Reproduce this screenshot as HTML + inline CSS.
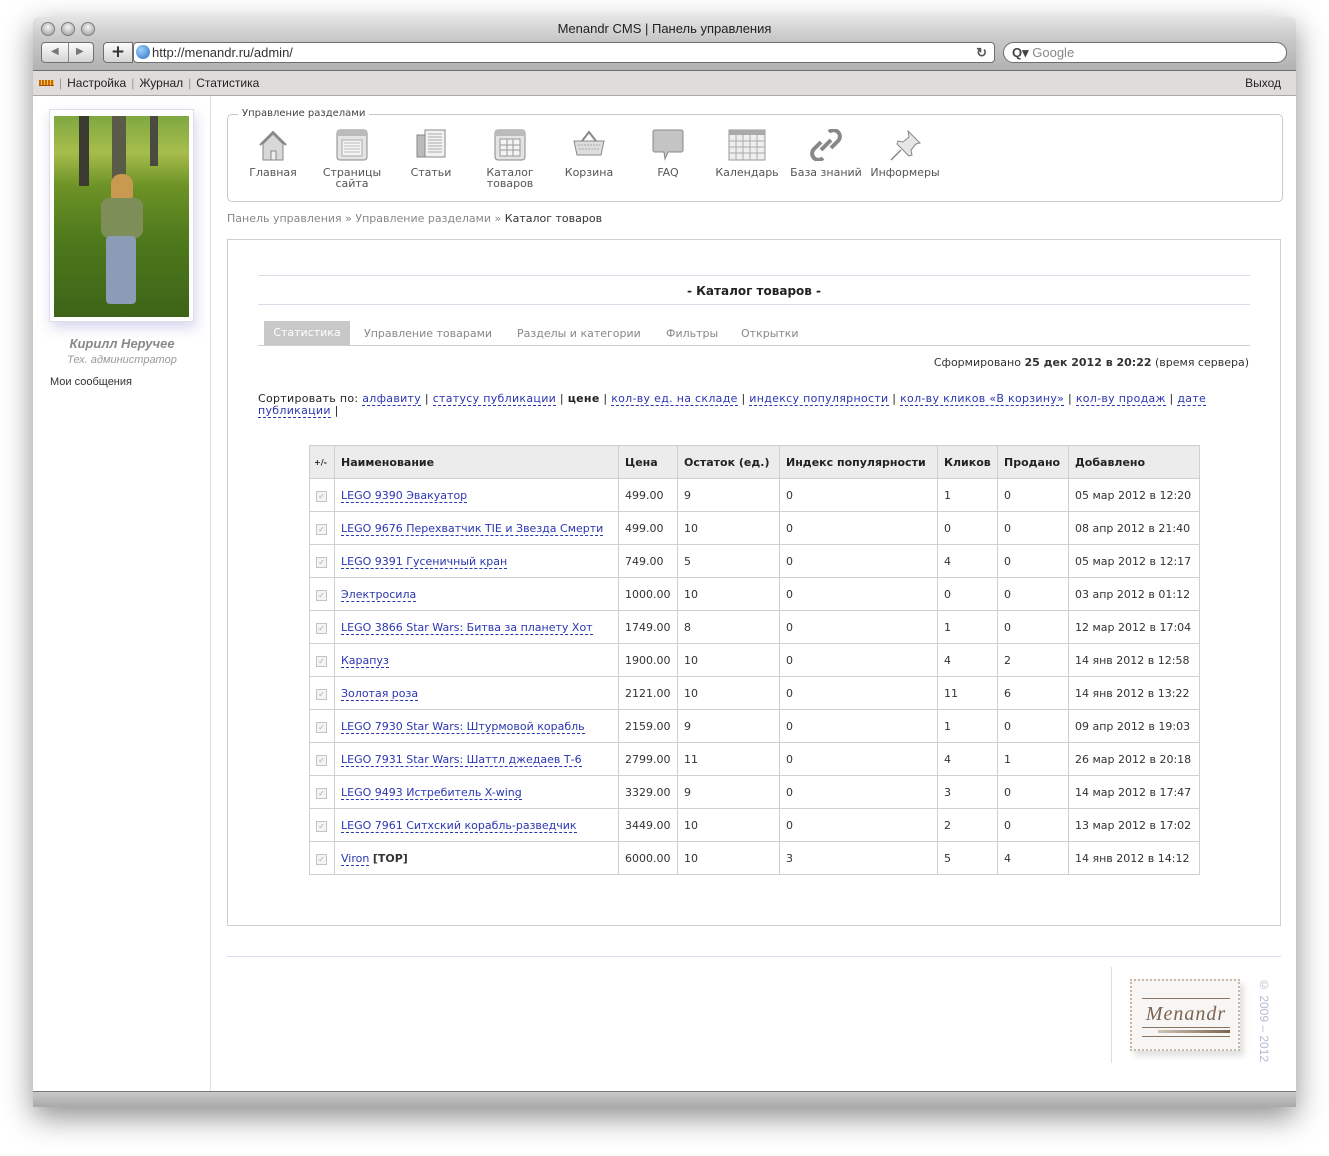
<!DOCTYPE html>
<html><head><meta charset="utf-8">
<style>
*{margin:0;padding:0;box-sizing:border-box}
body{width:1329px;height:1156px;background:#fff;position:relative;overflow:hidden;font-family:"DejaVu Sans","Liberation Sans",sans-serif;font-size:11px;color:#333}
.abs{position:absolute}
.win{left:33px;top:17px;width:1263px;height:1090px;box-shadow:0 10px 30px rgba(0,0,0,.45);border-radius:5px 5px 0 0;background:#fff;overflow:hidden}
.tb{left:0;top:0;width:1263px;height:54px;background:linear-gradient(#e4e4e4,#c9c9c9 40%,#b2b2b2);border-bottom:1px solid #6f6f6f}
.title{left:0;top:4px;width:1263px;text-align:center;font-family:"Liberation Sans",sans-serif;font-size:13px;color:#222}
.light{top:5px;width:14px;height:14px;border-radius:50%;background:radial-gradient(circle at 50% 35%,#f4f4f4,#b5b5b5 70%,#8a8a8a);border:1px solid #7d7d7d}
.btn{border:1px solid #707070;border-radius:4px;background:linear-gradient(#fbfbfb,#d4d4d4);height:21px}
.url{left:100px;top:25px;width:862px;height:21px;background:#fff;border:1px solid #6d6d6d;border-radius:4px;font-family:"Liberation Sans",sans-serif;font-size:13px;line-height:19px}
.search{left:970px;top:25px;width:284px;height:21px;background:#fff;border:1px solid #6d6d6d;border-radius:11px;font-family:"Liberation Sans",sans-serif;font-size:13px;color:#888;line-height:19px}
.nav{left:0;top:54px;width:1263px;height:25px;background:#e1dcdc;border-bottom:1px solid #a9a9a9;font-family:"Liberation Sans",sans-serif;font-size:12px;line-height:24px;color:#222}
.nav .sep{color:#999;margin:0 5px}
.side{left:0;top:79px;width:178px;height:995px;border-right:1px solid #dcdcee}
.bottom{left:0;top:1074px;width:1263px;height:16px;background:linear-gradient(#c9c9c9,#a9a9a9);border-top:1px solid #777}
a{color:#2a36b0;text-decoration:none;border-bottom:1px dashed #2a36b0}
.fs{left:194px;top:97px;width:1056px;height:88px;border:1px solid #c8c8c8;border-radius:5px}
.fs .lg{position:absolute;left:10px;top:-7px;background:#fff;padding:0 4px;font-size:10px;color:#444}
.ic{position:absolute;top:14px;width:78px;text-align:center;font-size:11px;color:#555;line-height:11px}
.ic svg{display:block;margin:0 auto 6px}
.crumb{left:194px;top:195px;font-size:11px;color:#888}
.panel{left:194px;top:222px;width:1054px;height:687px;border:1px solid #cfcfcf}
.hl{position:absolute;left:30px;width:992px;height:1px;background:#dcdce8}
table{position:absolute;left:81px;top:205px;border-collapse:collapse;font-size:11px}
td,th{border:1px solid #cfcfcf;height:33px;padding:0 6px;text-align:left;white-space:nowrap;color:#333}
th{background:#ececec;font-weight:bold;color:#222}
.cb{width:11px;height:11px;border:1px solid #c4c4c4;background:#f4f4f4;display:inline-block;font-size:8px;color:#aaa;line-height:9px;text-align:center}
</style></head><body>
<div class="abs win">
 <div class="abs tb">
  <div class="abs title">Menandr CMS | Панель управления</div>
  <div class="abs light" style="left:8px"></div>
  <div class="abs light" style="left:28px"></div>
  <div class="abs light" style="left:48px"></div>
  <div class="abs btn" style="left:8px;top:25px;width:53px"><span style="position:absolute;left:9px;top:3px;color:#777;font-size:10px">◀</span><span style="position:absolute;left:26px;top:0;width:1px;height:19px;background:#888"></span><span style="position:absolute;left:34px;top:3px;color:#777;font-size:10px">▶</span></div>
  <div class="abs btn" style="left:70px;top:25px;width:30px;border-radius:4px 0 0 4px;font-size:17px;font-weight:bold;text-align:center;line-height:19px;color:#333">+</div>
  <div class="abs url"><span style="display:inline-block;width:14px;height:14px;border-radius:50%;background:radial-gradient(circle at 35% 35%,#9fd0ff,#2b6fc2);vertical-align:-2px;margin:0 2px 0 2px"></span>http://menandr.ru/admin/<span style="position:absolute;right:7px;top:0;font-weight:bold;color:#555">↻</span></div>
  <div class="abs search"><span style="margin-left:8px;color:#444;font-weight:bold">Q▾</span> Google</div>
 </div>
 <div class="abs nav"><span style="display:inline-block;width:15px;height:6px;margin-left:6px;background:repeating-linear-gradient(90deg,#c46a00 0 2px,#f3c060 2px 3px);border-bottom:1px solid #a05000;vertical-align:1px"></span><span class="sep">|</span>Настройка<span class="sep">|</span>Журнал<span class="sep">|</span>Статистика<span style="position:absolute;right:15px">Выход</span></div>
 <div class="abs side">
  <div class="abs" style="left:16px;top:13px;width:145px;height:213px;background:#fff;border:1px solid #dedee8;box-shadow:2px 6px 12px rgba(140,140,210,.35)"></div>
  <div class="abs" style="left:21px;top:20px;width:135px;height:201px;background:linear-gradient(180deg,#7ea840 0%,#a7bd4c 18%,#6d9226 35%,#4f7a1c 60%,#3d6418 100%)">
   <div class="abs" style="left:25px;top:0;width:10px;height:70px;background:#3a3a30"></div>
   <div class="abs" style="left:58px;top:0;width:14px;height:75px;background:#5a5a48"></div>
   <div class="abs" style="left:96px;top:0;width:8px;height:50px;background:#4a4a40"></div>
   <div class="abs" style="left:57px;top:58px;width:22px;height:26px;border-radius:10px 10px 4px 4px;background:#c89a50"></div>
   <div class="abs" style="left:47px;top:82px;width:42px;height:40px;border-radius:8px;background:#7d8e58"></div>
   <div class="abs" style="left:52px;top:120px;width:30px;height:68px;background:#8c9cb6;border-radius:4px"></div>
  </div>
  <div class="abs" style="left:0;top:240px;width:178px;text-align:center;font-family:'Liberation Sans',sans-serif;font-weight:bold;font-style:italic;font-size:13px;color:#888">Кирилл Неручее</div>
  <div class="abs" style="left:0;top:258px;width:178px;text-align:center;font-family:'Liberation Sans',sans-serif;font-style:italic;font-size:11px;color:#999">Тех. администратор</div>
  <div class="abs" style="left:17px;top:280px;font-family:'Liberation Sans',sans-serif;font-size:11px;color:#333">Мои сообщения</div>
 </div>
 <div class="abs fs"><span class="lg">Управление разделами</span>
  <div class="ic" style="left:6px"><svg width="34" height="32" viewBox="0 0 34 32"><path d="M4 16 L17 3 L30 16" fill="none" stroke="#888" stroke-width="2"/><path d="M7 15 V31 H27 V15 L17 5Z" fill="#d8d8d8" stroke="#888"/><rect x="15" y="22" width="5" height="9" fill="#eee" stroke="#888"/></svg>Главная</div>
  <div class="ic" style="left:85px"><svg width="32" height="32"><rect x="1" y="1" width="30" height="30" rx="3" fill="#e4e4e4" stroke="#888"/><rect x="1" y="1" width="30" height="6" fill="#bbb"/><rect x="6" y="11" width="20" height="16" fill="#f4f4f4" stroke="#aaa"/><path d="M8 14h16M8 17h16M8 20h16M8 23h16" stroke="#bbb"/></svg>Страницы<br>сайта</div>
  <div class="ic" style="left:164px"><svg width="32" height="32"><rect x="2" y="6" width="14" height="22" fill="#bbb" stroke="#888"/><rect x="10" y="1" width="20" height="27" fill="#f2f2f2" stroke="#888"/><path d="M13 5h14M13 8h14M13 11h14M13 14h14M13 17h14M13 20h14M13 23h14" stroke="#aaa"/></svg>Статьи</div>
  <div class="ic" style="left:243px"><svg width="32" height="32"><rect x="1" y="1" width="30" height="30" rx="3" fill="#e4e4e4" stroke="#888"/><rect x="1" y="1" width="30" height="6" fill="#bbb"/><path d="M6 10h20v17H6zM6 16h20M6 21h20M13 10v17M19 10v17" fill="#f4f4f4" stroke="#999"/></svg>Каталог<br>товаров</div>
  <div class="ic" style="left:322px"><svg width="34" height="32"><path d="M10 12 L17 3 L24 12" fill="none" stroke="#888" stroke-width="2"/><path d="M2 12h30l-3 14H5z" fill="#ddd" stroke="#888"/><path d="M6 16h22M7 20h20" stroke="#aaa" stroke-dasharray="2 1"/></svg>Корзина</div>
  <div class="ic" style="left:401px"><svg width="32" height="32"><path d="M3 1h26a2 2 0 0 1 2 2v18a2 2 0 0 1-2 2H16l-3 7-1-7H3a2 2 0 0 1-2-2V3a2 2 0 0 1 2-2z" fill="#c4c4c4" stroke="#888"/></svg>FAQ</div>
  <div class="ic" style="left:480px"><svg width="38" height="32"><rect x="1" y="1" width="36" height="30" fill="#eee" stroke="#999"/><rect x="1" y="1" width="36" height="5" fill="#aaa"/><path d="M1 12h36M1 18h36M1 24h36M8 6v25M15 6v25M22 6v25M29 6v25" stroke="#aaa"/></svg>Календарь</div>
  <div class="ic" style="left:559px"><svg width="34" height="32"><path d="M20 3a6 6 0 0 1 9 9l-7 7M14 29a6 6 0 0 1-9-9l7-7" fill="none" stroke="#888" stroke-width="4"/><path d="M12 21l10-10" stroke="#888" stroke-width="4"/></svg>База знаний</div>
  <div class="ic" style="left:638px"><svg width="34" height="32"><path d="M20 2l12 12-4 1-5 6 1 5-3 1-12-12 1-3 5 1 6-5z" fill="#e6e6e6" stroke="#888"/><path d="M13 21L3 31" stroke="#888" stroke-width="1.5"/></svg>Информеры</div>
 </div>
 <div class="abs crumb">Панель управления » Управление разделами » <span style="color:#333">Каталог товаров</span></div>
 <div class="abs panel">
  <div class="hl" style="top:35px"></div>
  <div style="position:absolute;left:30px;width:992px;top:44px;text-align:center;font-weight:bold;font-size:12px;color:#222">- Каталог товаров -</div>
  <div class="hl" style="top:64px"></div>
  <div style="position:absolute;left:36px;top:81px;width:86px;height:24px;background:#c8c8c8;color:#fff;text-align:center;line-height:24px">Статистика</div>
  <div style="position:absolute;left:136px;top:87px;color:#888">Управление товарами</div>
  <div style="position:absolute;left:289px;top:87px;color:#888">Разделы и категории</div>
  <div style="position:absolute;left:438px;top:87px;color:#888">Фильтры</div>
  <div style="position:absolute;left:513px;top:87px;color:#888">Открытки</div>
  <div style="position:absolute;left:30px;top:105px;width:992px;height:1px;background:#cfcfcf"></div>
  <div style="position:absolute;right:31px;top:116px">Сформировано <b>25 дек 2012 в 20:22</b> (время сервера)</div>
  <div style="position:absolute;left:30px;top:153px;width:965px;line-height:12px;color:#222;letter-spacing:0.3px">Сортировать по: <a>алфавиту</a> | <a>статусу публикации</a> | <b>цене</b> | <a>кол-ву ед. на складе</a> | <a>индексу популярности</a> | <a>кол-ву кликов «В корзину»</a> | <a>кол-ву продаж</a> | <a>дате публикации</a> |</div>
  <table>
   <tr><th style="width:25px;font-size:8px;padding:0 4px">+/-</th><th style="width:284px">Наименование</th><th style="width:59px">Цена</th><th style="width:102px">Остаток (ед.)</th><th style="width:158px">Индекс популярности</th><th style="width:60px">Кликов</th><th style="width:71px">Продано</th><th style="width:131px">Добавлено</th></tr>
   <tr><td><span class="cb">✓</span></td><td><a>LEGO 9390 Эвакуатор</a></td><td>499.00</td><td>9</td><td>0</td><td>1</td><td>0</td><td>05 мар 2012 в 12:20</td></tr>
   <tr><td><span class="cb">✓</span></td><td><a>LEGO 9676 Перехватчик TIE и Звезда Смерти</a></td><td>499.00</td><td>10</td><td>0</td><td>0</td><td>0</td><td>08 апр 2012 в 21:40</td></tr>
   <tr><td><span class="cb">✓</span></td><td><a>LEGO 9391 Гусеничный кран</a></td><td>749.00</td><td>5</td><td>0</td><td>4</td><td>0</td><td>05 мар 2012 в 12:17</td></tr>
   <tr><td><span class="cb">✓</span></td><td><a>Электросила</a></td><td>1000.00</td><td>10</td><td>0</td><td>0</td><td>0</td><td>03 апр 2012 в 01:12</td></tr>
   <tr><td><span class="cb">✓</span></td><td><a>LEGO 3866 Star Wars: Битва за планету Хот</a></td><td>1749.00</td><td>8</td><td>0</td><td>1</td><td>0</td><td>12 мар 2012 в 17:04</td></tr>
   <tr><td><span class="cb">✓</span></td><td><a>Карапуз</a></td><td>1900.00</td><td>10</td><td>0</td><td>4</td><td>2</td><td>14 янв 2012 в 12:58</td></tr>
   <tr><td><span class="cb">✓</span></td><td><a>Золотая роза</a></td><td>2121.00</td><td>10</td><td>0</td><td>11</td><td>6</td><td>14 янв 2012 в 13:22</td></tr>
   <tr><td><span class="cb">✓</span></td><td><a>LEGO 7930 Star Wars: Штурмовой корабль</a></td><td>2159.00</td><td>9</td><td>0</td><td>1</td><td>0</td><td>09 апр 2012 в 19:03</td></tr>
   <tr><td><span class="cb">✓</span></td><td><a>LEGO 7931 Star Wars: Шаттл джедаев Т-6</a></td><td>2799.00</td><td>11</td><td>0</td><td>4</td><td>1</td><td>26 мар 2012 в 20:18</td></tr>
   <tr><td><span class="cb">✓</span></td><td><a>LEGO 9493 Истребитель X-wing</a></td><td>3329.00</td><td>9</td><td>0</td><td>3</td><td>0</td><td>14 мар 2012 в 17:47</td></tr>
   <tr><td><span class="cb">✓</span></td><td><a>LEGO 7961 Ситхский корабль-разведчик</a></td><td>3449.00</td><td>10</td><td>0</td><td>2</td><td>0</td><td>13 мар 2012 в 17:02</td></tr>
   <tr><td><span class="cb">✓</span></td><td><a>Viron</a> <b>[TOP]</b></td><td>6000.00</td><td>10</td><td>3</td><td>5</td><td>4</td><td>14 янв 2012 в 14:12</td></tr>
  </table>
 </div>
 <div class="abs" style="left:194px;top:939px;width:1054px;height:1px;background:#dcdcee"></div>
 <div class="abs" style="left:1078px;top:950px;width:1px;height:96px;background:#dcdcee"></div>
 <div class="abs" style="left:1097px;top:962px;width:110px;height:72px;background:#f8f6f4;border:2px dotted #c8b8a8;box-shadow:4px 5px 6px rgba(0,0,0,.12)">
  <div style="position:absolute;left:10px;top:17px;width:88px;height:1px;background:#8a7460"></div>
  <div style="position:absolute;left:10px;top:22px;width:88px;text-align:center;font-family:'Liberation Serif',serif;font-style:italic;font-size:20px;color:#7a6450;letter-spacing:1px">Menandr</div>
  <div style="position:absolute;left:10px;top:46px;width:88px;height:1px;background:#8a7460"></div>
  <div style="position:absolute;left:26px;top:49px;width:72px;height:3px;background:linear-gradient(90deg,#d0c4b8,#7a6450)"></div>
  <div style="position:absolute;left:10px;top:55px;width:88px;height:1px;background:#8a7460"></div>
 </div>
 <div class="abs" style="left:1224px;top:961px;writing-mode:vertical-rl;font-family:'Liberation Sans',sans-serif;font-size:12px;color:#b4bcd4">© 2009 – 2012</div>
 <div class="abs bottom"></div>
</div>
</body></html>
